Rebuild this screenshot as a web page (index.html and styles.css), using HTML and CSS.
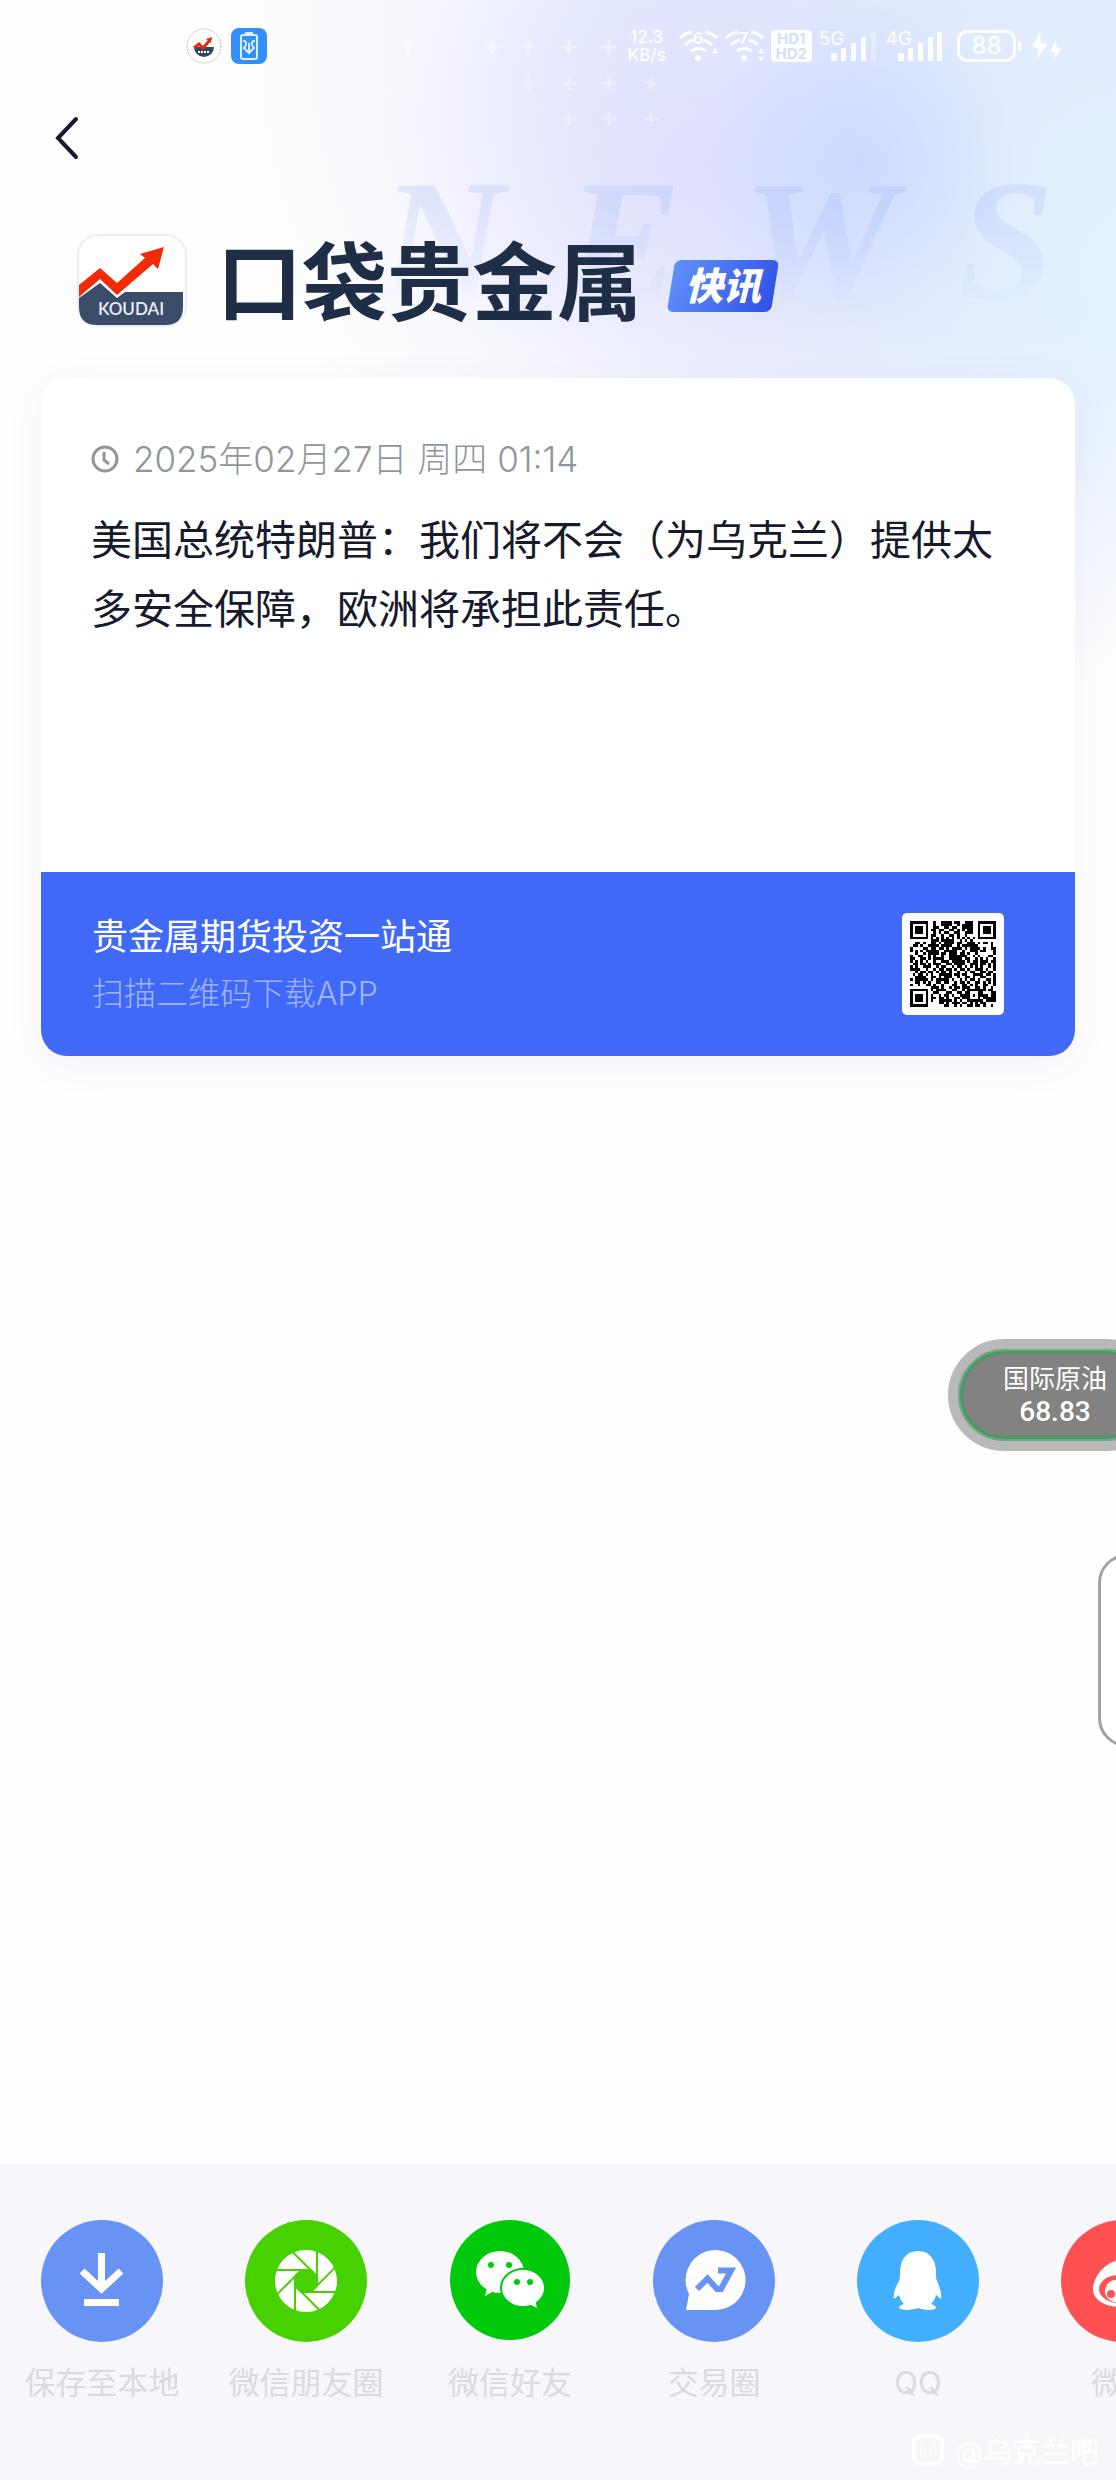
FILE: index.html
```
<!DOCTYPE html>
<html lang="zh-CN">
<head>
    <meta charset="UTF-8">
    <meta name="viewport" content="width=device-width, initial-scale=1.0">
    <title>口袋贵金属 快讯</title>
    <link rel="stylesheet" href="styles.css">
</head>
<body>
    <div class="backdrop" aria-hidden="true">
        <svg class="pluses" width="264" height="96" viewBox="0 0 264 96" fill="none" stroke="#fff" stroke-width="3">
            <path opacity=".45" d="M5 12h14M12 5v14M89 12h14M96 5v14M125 12h14M132 5v14M166 12h14M173 5v14M206 12h14M213 5v14"/>
            <path opacity=".35" d="M125 48h14M132 41v14M166 48h14M173 41v14M206 48h14M213 41v14M248 48h14M255 41v14"/>
            <path opacity=".28" d="M166 84h14M173 77v14M206 84h14M213 77v14M248 84h14M255 77v14"/>
        </svg>
        <div class="news"><span>N</span><span>E</span><span>W</span><span>S</span></div>
    </div>

    <div class="status-bar">
        <div class="status-left">
            <svg width="36" height="36" viewBox="0 0 36 36">
                <circle cx="18" cy="18" r="17" fill="#fff" stroke="#bbb" stroke-width="1" stroke-dasharray="2 1"/>
                <path d="M8 19h20a10 10 0 0 1-20 0z" fill="#33465f"/>
                <path d="M8 20l5-4 4 4 7-8" fill="none" stroke="#e02b10" stroke-width="3"/>
                <path d="M20 11l6-2-1 6z" fill="#e02b10"/>
                <path d="M12 24h12" stroke="#fff" stroke-width="2" stroke-dasharray="2 1"/>
            </svg>
            <svg width="36" height="36" viewBox="0 0 36 36">
                <rect width="36" height="36" rx="8" fill="#3390fb"/>
                <g fill="none" stroke="#d9f1ff" stroke-width="2">
                    <rect x="10" y="7" width="16" height="24" rx="2"/>
                    <path d="M14 5h8M12 13c5 0 3 5 1 7l5 5 5-5c-2-2-4-7 1-7M18 15v8"/>
                </g>
            </svg>
        </div>
        <div class="status-right">
            <div class="net-speed"><span>12.3</span><span>KB/s</span></div>
            <svg width="39" height="34" viewBox="0 0 39 34" fill="none" stroke="#fff" stroke-width="3">
                <path d="M1 9q5-5 12-6M26 3q7 1 12 6M6 16q4-4 9-5M24 11q5 1 9 5M12 22q7-5 15 0"/>
                <circle cx="19" cy="29" r="3" fill="#fff" stroke="none"/>
                <path d="M33 24l3-5 3 5z" fill="#fff" stroke="none"/>
                <text class="wifi-num" x="14" y="15">6</text>
            </svg>
            <svg width="39" height="34" viewBox="0 0 39 34" fill="none" stroke="#fff" stroke-width="3">
                <path d="M1 9q5-5 12-6M26 3q7 1 12 6M6 16q4-4 9-5M24 11q5 1 9 5M12 22q7-5 15 0"/>
                <circle cx="19" cy="29" r="3" fill="#fff" stroke="none"/>
                <path d="M33 24l3-5 3 5zM33 28l3 5 3-5z" fill="#fff" stroke="none"/>
                <text class="wifi-num" x="14" y="15">7</text>
            </svg>
            <div class="hd"><span>HD1</span><span>HD2</span></div>
            <div class="signal">
                <span>5G</span>
                <svg width="48" height="30" viewBox="0 0 48 30" fill="#fff">
                    <path d="M0 22h6v8H0zM10 17h5v13h-5zM20 12h5v18h-5zM30 6h5v24h-5z"/>
                    <path opacity=".3" d="M40 1h5v29h-5z"/>
                </svg>
            </div>
            <div class="signal">
                <span>4G</span>
                <svg width="48" height="30" viewBox="0 0 48 30" fill="#fff">
                    <path d="M0 22h6v8H0zM10 17h5v13h-5zM20 12h5v18h-5zM30 6h5v24h-5zM39 1h5v29h-5z"/>
                </svg>
            </div>
            <div class="battery">88</div>
            <svg width="34" height="32" viewBox="0 0 34 32" fill="#fff">
                <path d="M10 2L2 17l6 1-1 10 11-14-7-1zM26 11l-6 10 5 1-1 7 8-11-5-1z"/>
            </svg>
        </div>
    </div>

    <header>
        <button class="back" type="button" aria-label="返回">
            <svg width="24" height="46" viewBox="0 0 24 46" fill="none" stroke="#161a2c" stroke-width="4" stroke-linecap="round">
                <path d="M21 4L3 23l18 19"/>
            </svg>
        </button>
        <div class="brand">
            <svg class="app-icon" width="110" height="94" viewBox="0 0 110 94">
                <rect x="1" y="1" width="108" height="91" rx="20" fill="#fff" stroke="#ebebfb" stroke-width="2"/>
                <path d="M2 64L23 49l17 15 8-6h58v15q0 18-18 18H20Q2 91 2 73z" fill="#3a4c68"/>
                <path d="M2 51l21-17 17 15 28-25-5-4 24-7-6 22-5-5-36 31-17-16L2 63z" fill="#f02b06"/>
                <text class="koudai" x="54" y="81">KOUDAI</text>
            </svg>
            <h1>口袋贵金属</h1>
            <span class="tag">快讯</span>
        </div>
    </header>

    <main>
        <article class="card">
            <div class="card-body">
                <p class="date">
                    <svg width="28" height="28" viewBox="0 0 28 28" fill="none" stroke="#90969e" stroke-width="3">
                        <circle cx="14" cy="14" r="12"/>
                        <path d="M13 7v8l5 4"/>
                    </svg>
                    <time datetime="2025-02-27T01:14">2025年02月27日 周四 01:14</time>
                </p>
                <p class="headline">美国总统特朗普：我们将不会（为乌克兰）提供太多安全保障，欧洲将承担此责任。</p>
            </div>
            <div class="promo">
                <div>
                    <p class="promo-title">贵金属期货投资一站通</p>
                    <p class="promo-sub">扫描二维码下载APP</p>
                </div>
                <svg class="qr" viewBox="0 0 33 33" shape-rendering="crispEdges" role="img" aria-label="二维码"></svg>
            </div>
        </article>
    </main>

    <div class="quote">
        <span>国际原油</span>
        <strong>68.83</strong>
    </div>
    <div class="side-handle"></div>

    <footer>
        <nav class="share">
            <button type="button">
                <svg viewBox="0 0 122 122">
                    <circle cx="61" cy="61" r="61" fill="#6693f4"/>
                    <path d="M60.500 33v36M41 51l19.500 18L80 51" fill="none" stroke="#fff" stroke-width="7"/>
                    <path d="M43 79h35v7H43z" fill="#fff"/>
                </svg>
                保存至本地
            </button>
            <button type="button">
                <svg viewBox="0 0 122 122">
                    <circle cx="61" cy="61" r="61" fill="#48d100"/>
                    <circle cx="61" cy="61" r="31" fill="#fff"/>
                    <g transform="translate(61 61)" stroke="#48d100" stroke-width="2">
                        <path d="M11-4.600V4.600L4.600 11H-4.600L-11 4.600V-4.600L-4.600-11H4.600z" fill="#48d100"/>
                        <path d="M11-31V5"/>
                        <path d="M11-31V5" transform="rotate(45)"/>
                        <path d="M11-31V5" transform="rotate(90)"/>
                        <path d="M11-31V5" transform="rotate(135)"/>
                        <path d="M11-31V5" transform="rotate(180)"/>
                        <path d="M11-31V5" transform="rotate(225)"/>
                        <path d="M11-31V5" transform="rotate(270)"/>
                        <path d="M11-31V5" transform="rotate(315)"/>
                    </g>
                </svg>
                微信朋友圈
            </button>
            <button type="button">
                <svg viewBox="0 0 122 122">
                    <circle cx="61" cy="60" r="60" fill="#00c80b"/>
                    <g fill="#fff">
                        <ellipse cx="51" cy="52" rx="24" ry="21"/>
                        <path d="M38 68l-2 8 9-5z"/>
                        <ellipse cx="74" cy="68" rx="22" ry="19" stroke="#00c80b" stroke-width="2"/>
                        <path d="M80 84l8 4-2-9z"/>
                    </g>
                    <g fill="#00c80b">
                        <circle cx="42" cy="45" r="3"/>
                        <circle cx="60" cy="45" r="3"/>
                        <circle cx="68" cy="62" r="3"/>
                        <circle cx="81" cy="62" r="3"/>
                    </g>
                </svg>
                微信好友
            </button>
            <button type="button">
                <svg viewBox="0 0 122 122">
                    <circle cx="61" cy="61" r="61" fill="#6693f4"/>
                    <path d="M33 90l3-16A30 30 0 1 1 63 90z" fill="#fff"/>
                    <path d="M44 69l10.500-10.500L64 69h4l10-18.500H65" fill="none" stroke="#6693f4" stroke-width="6"/>
                </svg>
                交易圈
            </button>
            <button type="button">
                <svg viewBox="0 0 122 122">
                    <circle cx="61" cy="61" r="61" fill="#43aefe"/>
                    <path d="M61 31c-12 0-18 9-18 22 0 3 0 5-1 8-4 7-6 13-5 18l5-4c1 4 3 7 5 9-3 1-5 2-5 4 2 3 15 2 19 0 4 2 17 3 18 0 0-2-2-3-5-4 2-2 4-5 5-9l5 4c1-5-1-11-4-18-1-3-1-5-1-8 0-13-6-22-18-22z" fill="#fff"/>
                </svg>
                QQ
            </button>
            <button type="button">
                <svg viewBox="0 0 122 122">
                    <circle cx="61" cy="61" r="61" fill="#ff5052"/>
                    <path d="M59 40C45 41 32 57 32 69c0 12 14 18 28 18s29-8 29-19c0-6-5-8-9-9 3-9-4-11-14-7 1-6 0-12-7-12z" fill="#fff"/>
                    <ellipse cx="58" cy="69" rx="20" ry="14" fill="#ff5052"/>
                    <circle cx="55" cy="71" r="11" fill="#fff"/>
                    <circle cx="50" cy="74" r="4" fill="#ff5052"/>
                </svg>
                微博
            </button>
        </nav>
        <div class="watermark">
            <svg width="32" height="32" viewBox="0 0 32 32" fill="none" stroke="#fff">
                <rect x="2" y="2" width="28" height="28" rx="6" stroke-width="4"/>
                <path d="M9 10v11M13 10v11M9 10h4M20 9v7M20 12h4M18 16h6v6h-6z" stroke-width="1"/>
            </svg>
            <span>@乌克兰吧</span>
        </div>
    </footer>

    <script src="qr.js"></script>
</body>
</html>
```
FILE: styles.css
```
* {
    box-sizing: border-box;
}
body {
    margin: 0;
    min-height: 100vh;
    display: flex;
    flex-direction: column;
    position: relative;
    overflow-x: hidden;
    background-color: #fefefe;
    color: #161a2c;
    font-family: Inter, "Noto Sans CJK SC", sans-serif;
    font-weight: 300;
}
p,
h1 {
    margin: 0;
}
button {
    border: 0;
    padding: 0;
    background: none;
    font: inherit;
    color: inherit;
    cursor: pointer;
}
svg {
    display: block;
    flex-shrink: 0;
}

/* soft sky behind the header */
.backdrop {
    position: absolute;
    top: 0;
    left: 0;
    right: 0;
    height: 680px;
    z-index: -1;
    background:
        radial-gradient(ellipse 14% 24% at 77% 24%, rgba(190, 212, 253, 0.6), rgba(200, 218, 253, 0) 100%),
        radial-gradient(ellipse 30% 40% at 64% 24%, rgba(220, 216, 253, 0.6), rgba(226, 224, 253, 0) 100%),
        radial-gradient(ellipse 30% 60% at 102% 40%, rgba(226, 241, 255, 0.9), rgba(228, 240, 255, 0) 100%),
        radial-gradient(ellipse 66% 94% at 86% 6%, #e0eafe 0%, #e3ebfe 45%, rgba(243, 243, 254, 0.7) 74%, rgba(255, 255, 255, 0) 100%);
}
.pluses {
    position: absolute;
    top: 35px;
    left: 396px;
}
.news {
    position: absolute;
    top: 154px;
    left: 380px;
    right: 62px;
    display: flex;
    justify-content: space-between;
    font: italic bold 172px/172px "Liberation Serif", serif;
    color: rgba(130, 165, 245, 0.18);
    -webkit-mask-image: linear-gradient(#000 30%, transparent 92%);
    mask-image: linear-gradient(#000 30%, transparent 92%);
}

.status-bar {
    display: flex;
    justify-content: space-between;
    align-items: center;
    height: 92px;
    padding: 0 52px 0 186px;
    color: #fff;
}
.status-left {
    display: flex;
    gap: 9px;
}
.status-right {
    display: flex;
    align-items: center;
    gap: 7px;
}
.net-speed {
    display: flex;
    flex-direction: column;
    align-items: center;
    margin-right: 6px;
    font-size: 17px;
    font-weight: 500;
    line-height: 18px;
}
.wifi-num {
    font-size: 16px;
    font-weight: 600;
    fill: #fff;
    stroke: none;
}
.hd {
    display: flex;
    flex-direction: column;
    align-items: center;
    width: 41px;
    padding: 1px 0;
    border-radius: 4px;
    background-color: #fff;
    color: #d3defb;
    font-size: 15px;
    font-weight: 700;
    line-height: 15px;
}
.signal {
    display: flex;
    align-items: flex-end;
}
.signal span {
    align-self: flex-start;
    margin-right: -14px;
    font-size: 19px;
    font-weight: 400;
    line-height: 16px;
}
.battery {
    position: relative;
    width: 59px;
    margin: 0 7px 0 4px;
    border: 3px solid #fff;
    border-radius: 10px;
    text-align: center;
    font-size: 24px;
    font-weight: 500;
    line-height: 26px;
}
.battery::after {
    content: "";
    position: absolute;
    top: 8px;
    right: -8px;
    width: 3px;
    height: 10px;
    border-radius: 2px;
    background-color: #fff;
}

header {
    padding: 0 40px;
}
.back {
    display: block;
    margin: 23px 0 0 15px;
}
.brand {
    display: flex;
    align-items: center;
    height: 106px;
    margin: 67px 0 0 37px;
}
.koudai {
    font-family: Lato, sans-serif;
    font-size: 17px;
    font-weight: 600;
    text-anchor: middle;
    fill: #e8eef7;
}
h1 {
    margin: 0 0 10px 30px;
    color: #1f2e47;
    font-family: "Noto Sans CJK SC", sans-serif;
    font-size: 85px;
    font-weight: 700;
    line-height: 85px;
}
.tag {
    position: relative;
    z-index: 0;
    width: 104px;
    margin: 10px 0 0 29px;
    color: #fff;
    text-align: center;
    font-size: 38px;
    font-weight: 900;
    font-style: italic;
    line-height: 52px;
}
.tag::before {
    content: "";
    position: absolute;
    inset: 0;
    z-index: -1;
    border-radius: 6px;
    background: linear-gradient(110deg, #6291fc, #2e51e5);
    transform: skewX(-9deg);
}

main {
    padding: 44px 41px 0;
}
.card {
    border-radius: 26px;
    background-color: #fff;
    box-shadow: 0 8px 40px rgba(90, 90, 190, 0.06);
    overflow: hidden;
}
.card-body {
    min-height: 494px;
    padding: 56px 50px;
}
.date {
    display: flex;
    align-items: center;
    gap: 14px;
    color: #90969e;
    font-size: 35px;
    line-height: 50px;
}
.headline {
    margin-top: 22px;
    font-size: 41px;
    font-weight: 400;
    line-height: 69px;
}
.promo {
    display: flex;
    justify-content: space-between;
    align-items: center;
    height: 184px;
    padding: 0 71px 0 51px;
    background-color: #4169f8;
}
.promo-title {
    color: #fff;
    font-size: 36px;
    font-weight: 400;
    line-height: 60px;
}
.promo-sub {
    color: #a0b4fb;
    font-size: 32px;
    line-height: 54px;
}
.qr {
    width: 102px;
    height: 102px;
    padding: 8px;
    border-radius: 5px;
    background-color: #fff;
}

/* floating price bubble, half off the right edge */
.quote {
    position: absolute;
    top: 1339px;
    right: -46px;
    width: 214px;
    height: 112px;
    display: flex;
    flex-direction: column;
    align-items: center;
    justify-content: center;
    border: 10px solid #b9b9b9;
    border-radius: 56px;
    background-color: #828282;
    box-shadow: inset 0 0 0 2px #6cab86, inset 0 0 0 5px #4c9864;
    color: #fff;
    font-size: 26px;
    font-weight: 400;
    line-height: 33px;
}
.quote strong {
    font-family: Roboto, sans-serif;
    font-size: 28px;
    font-weight: 500;
}
.side-handle {
    position: absolute;
    top: 1554px;
    right: -40px;
    width: 58px;
    height: 193px;
    border: 3px solid #a2a2a2;
    border-radius: 30px;
    background-color: #fff;
}

footer {
    margin-top: auto;
    background-color: #f6f6fb;
}
.share {
    display: flex;
    overflow: hidden;
    padding-top: 56px;
}
.share button {
    display: flex;
    flex-direction: column;
    align-items: center;
    flex: 0 0 204px;
    gap: 18px;
    color: #dadae0;
    font-size: 31px;
    font-weight: 400;
    line-height: 46px;
}
.share svg {
    width: 122px;
    height: 122px;
}
.watermark {
    display: flex;
    justify-content: flex-end;
    align-items: center;
    gap: 11px;
    height: 74px;
    padding: 14px 17px 0 0;
    color: #fff;
    font-size: 29px;
    font-weight: 500;
}
```
FILE: qr.js
```
const modules = [
    '#######..#..####.##..###..#######',
    '#.....#..#..####..#.####..#.....#',
    '#.###.#..##..##.##..####..#.###.#',
    '#.###.#.##.##..##.#.#.##..#.###.#',
    '#.###.#..#.#.##..##..###..#.###.#',
    '#.....#.##..#..##.#..#....#.....#',
    '#######.#.#.#.#.#.#.#.#.#.#######',
    '........###.#####..#.#.#.........',
    '..##.#..##.#.####.##..###.#.##.#.',
    '.##.#..####.####..#.######.....#.',
    '#....##.##.##.#.####.#.####.#..##',
    '#.#.#.#####..#####..#..###.##...#',
    '..#..#.####.##.###.##.#..#......#',
    '#..##..#.#..#..#######..#.#...##.',
    '##..##.#.####..#####.##..#.#.#..#',
    '#.#.#.#..#..###.#####.#.##.###.##',
    '.##.##.#.###..##.####..###.##.#.#',
    '#.#..###..#.##..#.##.#.#.#.#..#.#',
    '####..#..#.##.##.#.##.#..###.#..#',
    '..#.##.##.#.##.#..#..#.##..##.##.',
    '.#.##.#.#..#####.##.##..####.##.#',
    '..####..##.#.###..#..##.#..##...#',
    '#.#####.#.#####.#..#.#.##.#..##.#',
    '..##.#.#..##.##..#.##.#..##.#.#.#',
    '#..#..##.#..#...##..##.#.#..##..#',
    '........###.#..#.##.###..##.#..#.',
    '#######.#.####..##..#.#######.##.',
    '#.....#..##...##..##.##...##...##',
    '#.###.#.#..#.##.#..####.#.####.##',
    '#.###.#.##.##.#..##.###...#.#####',
    '#.###.#.#..#####.#.#..######.####',
    '#.....#....##.#.###.##.#.#.##....',
    '#######......##..#.#..##.##.#..#.'
];

const path = document.createElementNS('http://www.w3.org/2000/svg', 'path');
let d = '';
modules.forEach((row, y) => {
    [...row].forEach((cell, x) => {
        if (cell === '#') d += `M${x} ${y}h1v1h-1z`;
    });
});
path.setAttribute('d', d);
document.querySelector('.qr').appendChild(path);
```
